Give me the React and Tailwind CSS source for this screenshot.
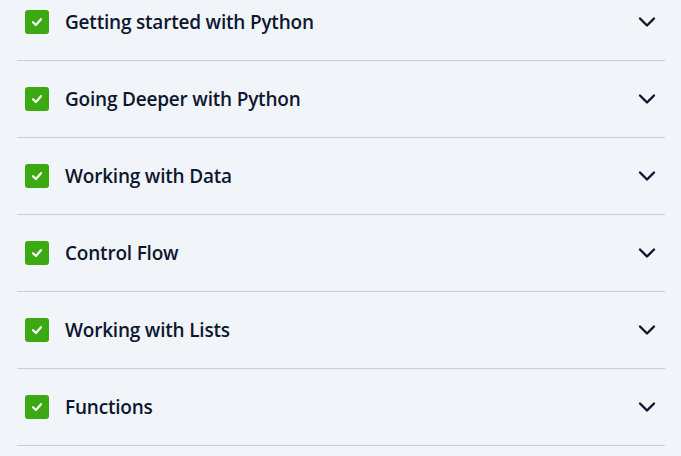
import React from "react";

const items = [
  "Getting started with Python",
  "Going Deeper with Python",
  "Working with Data",
  "Control Flow",
  "Working with Lists",
  "Functions",
];

function Check() {
  return (
    <div className="w-6 h-6 rounded-[3px] bg-[#3aa912] flex items-center justify-center shrink-0">
      <svg width="14" height="14" viewBox="0 0 14 14" fill="none">
        <path d="M3 7.2 L5.9 10 L11 4.2" stroke="white" strokeWidth="2.2" strokeLinecap="round" strokeLinejoin="round" />
      </svg>
    </div>
  );
}

function Chevron() {
  return (
    <svg width="18" height="12" viewBox="0 0 18 12" fill="none" className="shrink-0">
      <path d="M2 2.5 L9 9.5 L16 2.5" stroke="#0d1730" strokeWidth="2.4" strokeLinecap="round" strokeLinejoin="round" />
    </svg>
  );
}

export default function App() {
  return (
    <div className="w-[681px] h-[456px] overflow-hidden bg-[#f1f4f8]" style={{ fontFamily: '"Open Sans", sans-serif' }}>
      <div className="mx-[17px] w-[648px] -mt-4">
        {items.map((t) => (
          <div key={t} className="h-[77px] border-b border-[#c6ced9] flex items-center pl-2 pr-[9px]">
            <Check />
            <span className="ml-4 text-[19px] font-semibold text-[#0d1730] tracking-[-0.2px] flex-1">{t}</span>
            <Chevron />
          </div>
        ))}
      </div>
    </div>
  );
}
